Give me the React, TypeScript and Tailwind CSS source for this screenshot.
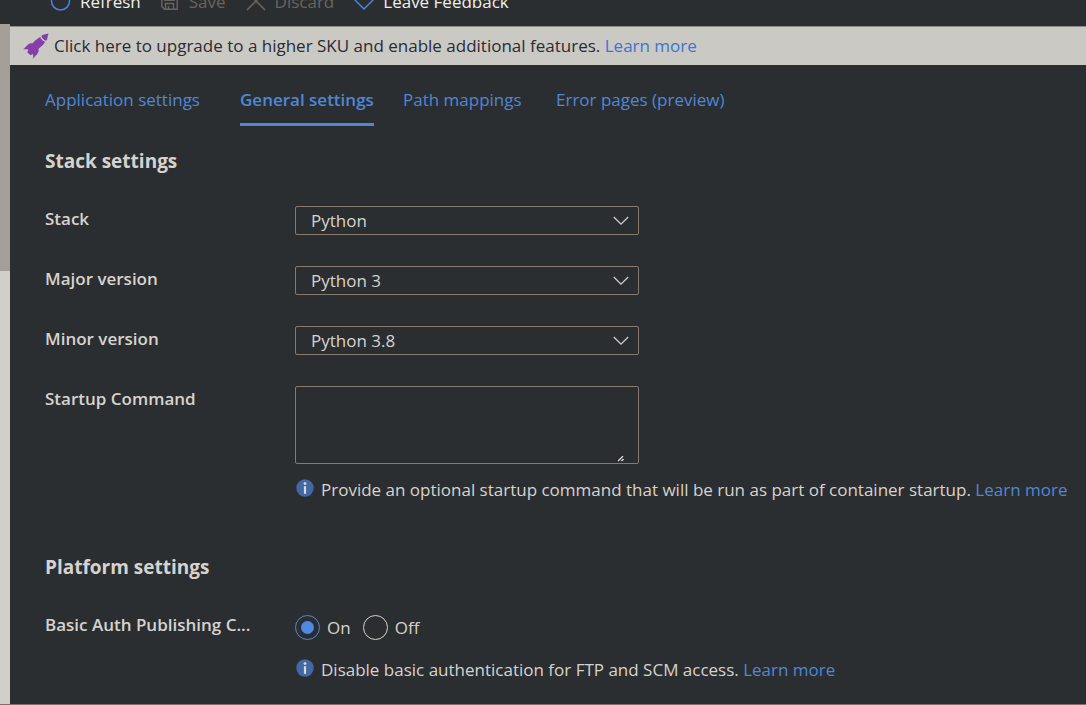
import { useState } from "react";
import type { ReactNode } from "react";

const tabs = [
  { label: "Application settings", width: "w-[195px]" },
  { label: "General settings", width: "w-[163px]" },
  { label: "Path mappings", width: "w-[153px]" },
  { label: "Error pages (preview)", width: "w-[180px]" },
];

function InfoIcon() {
  return (
    <svg viewBox="0 0 18 18" className="mt-px h-[18px] w-[18px] shrink-0" aria-hidden="true">
      <circle cx="9" cy="9" r="8.7" fill="#4268a5" />
      <circle cx="9" cy="4.6" r="1.4" fill="#dedcd8" />
      <path d="M7.9 7.2h2.2v7.6H7.9z" fill="#dedcd8" />
    </svg>
  );
}

function Hint({ children }: { children: ReactNode }) {
  return (
    <div className="flex gap-[7px] pl-px">
      <InfoIcon />
      <p className="whitespace-nowrap">
        {children}{" "}
        <a href="#learn" className="text-[#4f87d6]">Learn more</a>
      </p>
    </div>
  );
}

function SelectRow({ id, label, value }: { id: string; label: string; value: string }) {
  return (
    <div className="flex h-[60px] items-start">
      <label htmlFor={id} className="w-[250px] shrink-0 pt-px font-semibold">{label}</label>
      <div className="relative w-[344px]">
        <select
          id={id}
          defaultValue={value}
          className="block h-[29px] w-full appearance-none rounded-xs border border-[#857a6f] bg-transparent pl-[15px]"
        >
          <option>{value}</option>
        </select>
        <svg viewBox="0 0 16 10" className="pointer-events-none absolute top-[10px] right-[10px] h-[10px] w-4" fill="none" aria-hidden="true">
          <path d="M.8 1 8 8.2 15.2 1" stroke="#d0cec9" strokeWidth="1.3" />
        </svg>
      </div>
    </div>
  );
}

function AuthRadio({ label, checked, onChange }: { label: string; checked: boolean; onChange: () => void }) {
  return (
    <label className="flex items-center gap-[7px]">
      <input
        type="radio"
        name="basic-auth"
        checked={checked}
        onChange={onChange}
        className="grid h-[25px] w-[25px] appearance-none place-items-center rounded-full border border-[#d5d3ce] before:h-[13px] before:w-[13px] before:rounded-full checked:border-[#4f87d6] checked:before:bg-[#4f8ae0]"
      />
      {label}
    </label>
  );
}

export default function App() {
  const [auth, setAuth] = useState("On");
  const [active, setActive] = useState("General settings");
  return (
    <div className="flex min-h-screen flex-col overflow-hidden border-b border-[#777274] bg-[#2b2e31] font-['Open_Sans','Noto_Sans',sans-serif] text-[17px] leading-6 text-[#d6d3ce]">
      <header className="flex h-6 items-end gap-5 overflow-hidden pb-[10px] pl-[50px]">
        <button className="flex items-center gap-[9px] text-[#f0eeea]">
          <svg viewBox="0 0 21 20" className="h-5 w-[21px]" fill="none" aria-hidden="true">
            <circle cx="10.5" cy="9" r="9" stroke="#4c83dd" strokeWidth="1.5" />
          </svg>
          Refresh
        </button>
        <button disabled className="flex items-center gap-[11px] text-[#6a645e]">
          <svg viewBox="0 0 17 18" className="mb-[3px] h-[18px] w-[17px]" fill="none" stroke="currentColor" strokeWidth="1.4" aria-hidden="true">
            <path d="M.8.8h15.4v16.4H3.5L.8 14.5zM4 .8v7.4h9V.8M4.5 17v-5.5h8V17M7.5 17v-3" />
          </svg>
          Save
        </button>
        <button disabled className="flex items-center gap-[9px] text-[#6a645e]">
          <svg viewBox="0 0 20 20" className="mb-[3px] h-5 w-5" fill="none" stroke="currentColor" strokeWidth="1.6" aria-hidden="true">
            <path d="m1 1 18 18M19 1 1 19" />
          </svg>
          Discard
        </button>
        <button className="flex items-center gap-[9px] text-[#f0eeea]">
          <svg viewBox="0 0 20 20" className="mb-[3px] h-5 w-5" fill="none" stroke="#4c83dd" strokeWidth="1.5" aria-hidden="true">
            <path d="M10 18 1 9V5l5-4 4 3 4-3 5 4v4z" />
          </svg>
          Leave Feedback
        </button>
      </header>
      <div className="flex flex-1">
        <div className="flex w-[10px] shrink-0 flex-col bg-[#d0cfca]">
          <div className="h-[247px] bg-[#a39e97]" />
        </div>
        <main className="min-w-0 flex-1 pt-[2px]">
          <div className="flex h-[39px] items-center gap-[5px] border-t border-[#8f8d89] bg-[#cac9c4] pl-[13px] text-[#292b35]">
            <svg viewBox="0 0 26 26" className="h-[26px] w-[26px]" fill="#853fa6" aria-hidden="true">
              <path d="M25.4.4 19.4 2l-1 1.2c.8 2.2 2.3 3.8 4.6 4.5l1-1z" />
              <path d="M17.2 4c-2.8 1.5-5.4 3.6-7.6 6.2-3.6-.4-5 1.300-9.400 6.400 2.100-.5 3.800-.4 5.300.1l-1.300 2.500 3.400 3.100 2.200-1.200c.6 1.400.4 2.900 0 4.600 4.400-4.400 6.400-6.200 5.800-10 2.800-2 5-4.300 6.600-6.900-2.400-.8-4.200-2.500-5-4.800z" />
            </svg>
            <p className="whitespace-nowrap">
              Click here to upgrade to a higher SKU and enable additional features.{" "}
              <a href="#upgrade" className="text-[#3e74d2]">Learn more</a>
            </p>
          </div>
          <div className="pl-[35px]">
            <nav className="flex pt-[23px] text-[#4f87d6]">
              {tabs.map((tab) => (
                <div key={tab.label} className={tab.width}>
                  <button
                    onClick={() => setActive(tab.label)}
                    className={
                      tab.label === active
                        ? "h-[38px] border-b-3 border-[#4f87d6] pb-[11px] font-semibold whitespace-nowrap"
                        : "h-[38px] pb-[14px] whitespace-nowrap"
                    }
                  >
                    {tab.label}
                  </button>
                </div>
              ))}
            </nav>
            <section className="pt-[23px]">
              <h2 className="h-[57px] text-[19px] font-bold">Stack settings</h2>
              <SelectRow id="stack" label="Stack" value="Python" />
              <SelectRow id="major" label="Major version" value="Python 3" />
              <SelectRow id="minor" label="Minor version" value="Python 3.8" />
              <div className="flex items-start">
                <label htmlFor="startup" className="w-[250px] shrink-0 pt-px font-semibold">Startup Command</label>
                <div>
                  <div className="relative mb-[14px] h-[78px] w-[344px] rounded-xs border border-[#857a6f]">
                    <textarea id="startup" className="block h-full w-full resize-none bg-transparent px-[15px]" />
                    <svg viewBox="0 0 8 8" className="pointer-events-none absolute right-[14px] bottom-px h-2 w-2" aria-hidden="true">
                      <path d="M0 7 7 0v2L2 7z" fill="#111" />
                      <path d="m2 7 5-5M5.5 7 7.5 5" stroke="#e0dfdc" strokeWidth="1.4" />
                    </svg>
                  </div>
                  <Hint>Provide an optional startup command that will be run as part of container startup.</Hint>
                </div>
              </div>
            </section>
            <section className="pt-[53px]">
              <h2 className="h-[58px] text-[19px] font-bold">Platform settings</h2>
              <div className="flex items-start">
                <div className="w-[250px] shrink-0 font-semibold">Basic Auth Publishing C...</div>
                <div>
                  <div className="flex gap-3 pt-[2px] pb-[18px]" role="radiogroup" aria-label="Basic Auth Publishing Credentials">
                    <AuthRadio label="On" checked={auth === "On"} onChange={() => setAuth("On")} />
                    <AuthRadio label="Off" checked={auth === "Off"} onChange={() => setAuth("Off")} />
                  </div>
                  <Hint>Disable basic authentication for FTP and SCM access.</Hint>
                </div>
              </div>
            </section>
          </div>
        </main>
      </div>
    </div>
  );
}
